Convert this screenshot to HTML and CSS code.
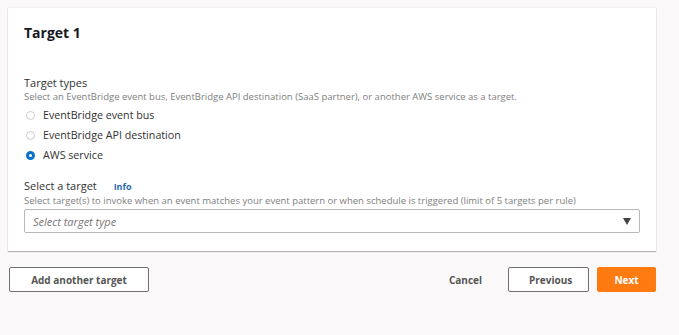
FILE: index.html
```html
<!DOCTYPE html>
<html lang="en">
<head>
    <meta charset="UTF-8">
    <title>Target</title>
    <link rel="stylesheet" href="styles.css">
</head>
<body>
    <div class="page">
        <div class="card">
            <h2>Target 1</h2>

            <div class="field">
                <div class="label">Target types</div>
                <div class="hint">Select an EventBridge event bus, EventBridge API destination (SaaS partner), or another AWS service as a target.</div>
                <label class="radio"><span class="dot"></span>EventBridge event bus</label>
                <label class="radio"><span class="dot"></span>EventBridge API destination</label>
                <label class="radio"><span class="dot checked"></span>AWS service</label>
            </div>

            <div class="field last">
                <div class="label">Select a target <a class="info">Info</a></div>
                <div class="hint">Select target(s) to invoke when an event matches your event pattern or when schedule is triggered (limit of 5 targets per rule)</div>
                <div class="select">
                    <span>Select target type</span>
                    <span class="caret"></span>
                </div>
            </div>
        </div>

        <div class="actions">
            <button class="btn add">Add another target</button>
            <div class="right">
                <button class="btn link">Cancel</button>
                <button class="btn prev">Previous</button>
                <button class="btn primary">Next</button>
            </div>
        </div>
    </div>
</body>
</html>
```

FILE: styles.css
```css
body {
    margin: 0;
    background: #fbf8f9;
    font-family: "Open Sans", Arial, sans-serif;
    color: #16191f;
}

.page {
    width: 648px;
    padding: 8px 0 0 8px;
}

.card {
    background: #fff;
    box-shadow: 0 1px 1px rgba(0, 0, 0, 0.25), 0 0 1px rgba(0, 0, 0, 0.15);
    padding: 16px 16px 18px 16px;
}

h2 {
    margin: 0 0 34px 0;
    font-size: 14px;
    font-weight: 700;
    line-height: 18px;
}

.field {
    margin-bottom: 14px;
}

.field.last {
    margin-bottom: 0;
}

.label {
    font-size: 11px;
    line-height: 14px;
    color: #333;
}

.info {
    color: #2a6bb5;
    font-weight: 700;
    font-size: 9px;
    margin-left: 14px;
}

.hint {
    font-size: 9.5px;
    line-height: 13px;
    color: #808080;
    margin-bottom: 2px;
}

.last .hint {
    margin-bottom: 2px;
}

.radio {
    display: flex;
    align-items: center;
    font-size: 10.7px;
    line-height: 20px;
    color: #333;
}

.dot {
    width: 9px;
    height: 9px;
    border: 1px solid #ccc;
    border-radius: 50%;
    margin: 0 8px 0 2px;
    box-sizing: border-box;
}

.dot.checked {
    border: 3px solid #0a73c9;
}

.select {
    display: flex;
    justify-content: space-between;
    align-items: center;
    height: 24px;
    border: 1px solid #b8b8b8;
    border-radius: 2px;
    padding: 0 8px;
    box-sizing: border-box;
    font-size: 11px;
    font-style: italic;
    color: #777;
}

.caret {
    width: 0;
    height: 0;
    border-left: 4.5px solid transparent;
    border-right: 4.5px solid transparent;
    border-top: 7px solid #444;
}

.actions {
    display: flex;
    justify-content: space-between;
    margin-top: 16px;
}

.right {
    display: flex;
    gap: 8px;
}

.btn {
    height: 25px;
    border: 1px solid #707070;
    border-radius: 2px;
    background: #fff;
    font-family: "Open Sans", Arial, sans-serif;
    font-size: 10px;
    font-weight: 700;
    color: #555;
    padding: 0 20px;
}

.btn.add {
    width: 140px;
    margin-left: 1px;
    padding: 0;
}

.btn.link {
    border-color: transparent;
    background: transparent;
    padding: 0 12px;
    margin-right: 5px;
}

.btn.prev {
    width: 81px;
}

.btn.primary {
    width: 59px;
    padding: 0;
    background: #ff7a11;
    border-color: #ff7a11;
    color: #fff;
}
```
